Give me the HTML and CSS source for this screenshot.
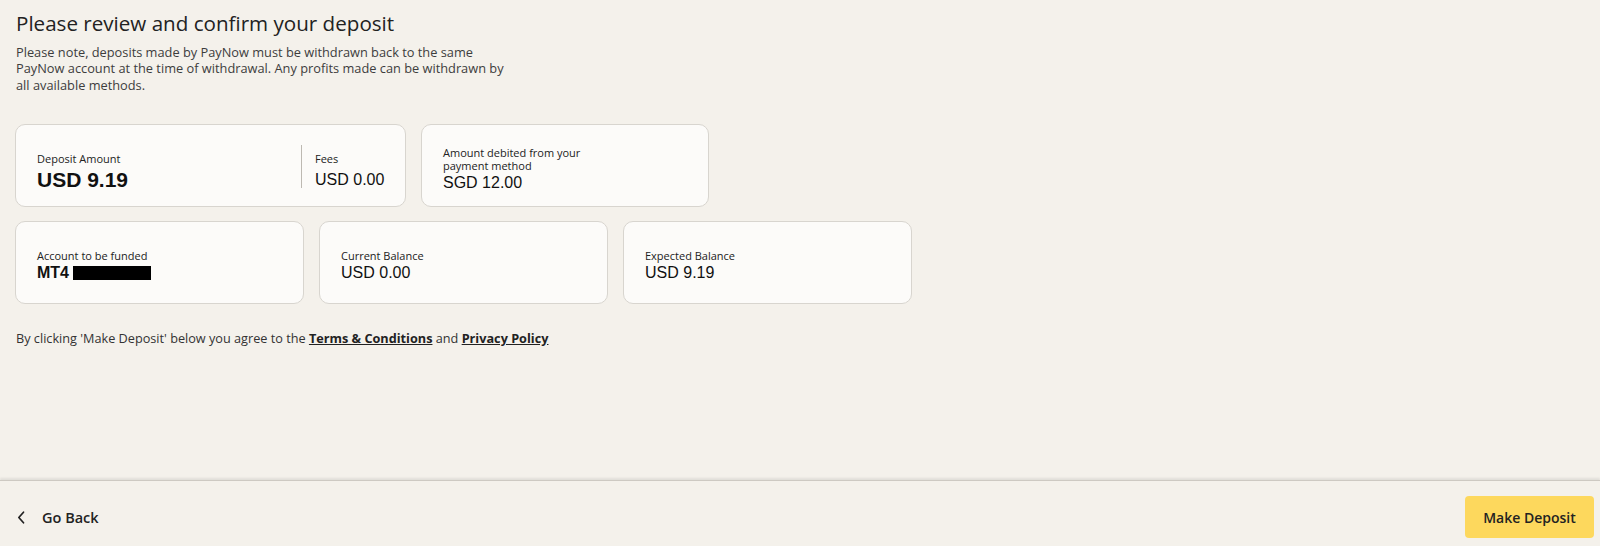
FILE: index.html
```html
<!DOCTYPE html>
<html lang="en">
<head>
<meta charset="utf-8">
<title>Confirm deposit</title>
<link rel="stylesheet" href="styles.css">
</head>
<body>
<div class="page">
  <main class="content">
    <h1 class="title">Please review and confirm your deposit</h1>
    <p class="note">Please note, deposits made by PayNow must be withdrawn back to the same<br>PayNow account at the time of withdrawal. Any profits made can be withdrawn by<br>all available methods.</p>

    <div class="row row-first">
      <div class="card card-wide">
        <div class="split">
          <div class="cell">
            <div class="label">Deposit Amount</div>
            <div class="value value-big">USD 9.19</div>
          </div>
          <div class="cell cell-fees">
            <div class="label">Fees</div>
            <div class="value value-fees">USD 0.00</div>
          </div>
        </div>
      </div>
      <div class="card card-two">
        <div class="label label-wrap">Amount debited from your payment method</div>
        <div class="value value-gap">SGD 12.00</div>
      </div>
    </div>

    <div class="row">
      <div class="card">
        <div class="label">Account to be funded</div>
        <div class="value value-bold">MT4 <span class="redact"></span></div>
      </div>
      <div class="card">
        <div class="label">Current Balance</div>
        <div class="value">USD 0.00</div>
      </div>
      <div class="card">
        <div class="label">Expected Balance</div>
        <div class="value">USD 9.19</div>
      </div>
    </div>

    <p class="terms">By clicking 'Make Deposit' below you agree to the <a href="#">Terms &amp; Conditions</a> and <a href="#">Privacy Policy</a></p>
  </main>

  <footer class="footer">
    <a class="back" href="#">
      <svg class="chev" width="8" height="13" viewBox="0 0 8 13"><path d="M6.5 1.2 L1.8 6.5 L6.5 11.8" fill="none" stroke="#222" stroke-width="1.7" stroke-linecap="round" stroke-linejoin="round"/></svg>
      <span>Go Back</span>
    </a>
    <button class="btn" type="button">Make Deposit</button>
  </footer>
</div>
</body>
</html>
```

FILE: styles.css
```css
* { box-sizing: border-box; }
html, body { margin: 0; padding: 0; }
body {
  background: #f4f1eb;
  font-family: "Open Sans", "Liberation Sans", sans-serif;
  color: #222;
}
.page {
  height: 546px;
  display: flex;
  flex-direction: column;
}
.content {
  flex: 1;
  padding: 11px 15px 0 15px;
}
.title {
  margin: 0 0 0 1px;
  font-size: 20.6px;
  line-height: 25px;
  font-weight: 500;
  color: #222;
}
.note {
  margin: 8px 0 0 1px;
  font-size: 12.8px;
  line-height: 16.3px;
  color: #3d3d3d;
}
.row {
  display: flex;
  gap: 15px;
  margin-top: 14px;
}
.row-first { margin-top: 31px; }
.card {
  width: 289px;
  height: 83px;
  background: #fcfbf9;
  border: 1px solid #d8d5cf;
  border-radius: 10px;
  padding: 27.5px 21px 0 21px;
  display: flex;
  flex-direction: column;
  justify-content: flex-start;
}
.card-wide { width: 391px; padding: 20.5px 0 0 21px; }
.card-two { width: 288px; padding-top: 21.4px; }
.split { display: flex; align-items: flex-start; height: 43px; }
.cell { flex: 1; padding-top: 6.7px; }
.cell-fees {
  flex: 0 0 104px;
  height: 43px;
  border-left: 1px solid #bdb9b2;
  padding-left: 13px;
}
.label {
  font-size: 11px;
  line-height: 14px;
  color: #222;
}
.label-wrap { max-width: 150px; line-height: 13px; }
.value {
  font-family: "Liberation Sans", Arial, sans-serif;
  font-size: 16px;
  line-height: 20px;
  color: #111;
}
.value-gap { margin-top: 1px; }
.value-big {
  margin-top: 1.5px;
  font-size: 21px;
  line-height: 24px;
  font-weight: 700;
}
.value-fees { margin-top: 4px; }
.value-bold { font-weight: 700; display: flex; align-items: center; gap: 4px; }
.redact {
  display: inline-block;
  width: 78px;
  height: 14px;
  background: #000;
}
.terms {
  margin: 26px 0 0 1px;
  font-size: 12.7px;
  line-height: 16px;
  color: #333;
}
.terms a {
  color: #222;
  font-weight: 700;
  text-decoration: underline;
}
.footer {
  height: 66px;
  flex: 0 0 66px;
  border-top: 1px solid #cdc9c2;
  box-shadow: 0 -2px 2px rgba(0,0,0,0.08);
  display: flex;
  align-items: center;
  justify-content: space-between;
  padding: 7px 6px 0 17px;
}
.back {
  display: flex;
  align-items: center;
  gap: 17px;
  text-decoration: none;
  color: #222;
  font-size: 14.5px;
  font-weight: 600;
}
.btn {
  width: 129px;
  height: 42px;
  background: #fdd85d;
  border: 0;
  border-radius: 4px;
  font-family: "Open Sans", "Liberation Sans", sans-serif;
  font-size: 14px;
  font-weight: 600;
  color: #222;
}
```
